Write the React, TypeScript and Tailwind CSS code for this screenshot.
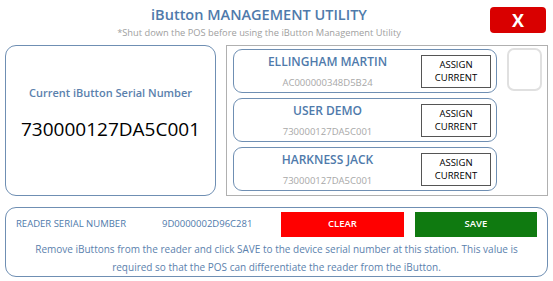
const font = { fontFamily: '"Open Sans", "Noto Sans", sans-serif' }

const users = [
  { name: 'ELLINGHAM MARTIN', serial: 'AC000000348D5B24' },
  { name: 'USER DEMO', serial: '730000127DA5C001' },
  { name: 'HARKNESS JACK', serial: '730000127DA5C001' },
]

function UserRow({ name, serial }: { name: string; serial: string }) {
  return (
    <div className="flex h-[44px] items-center rounded-[9px] border border-[#6f8fb3] pr-[5px]">
      <div className="flex flex-1 flex-col items-center self-stretch pt-[4px]">
        <span className="text-[12px] font-semibold leading-[16px] text-[#4f7aab]">{name}</span>
        <span className="mt-[7px] text-[9.5px] leading-[12px] text-[#a8a8a8]">{serial}</span>
      </div>
      <button className="flex h-[33px] w-[70px] flex-col items-center justify-center border border-[#555] text-[9.5px] leading-[13px] text-black">
        <span>ASSIGN</span>
        <span>CURRENT</span>
      </button>
    </div>
  )
}

export default function App() {
  return (
    <div className="h-[281px] w-[553px] bg-white" style={font}>
      <div className="flex pl-[28px] pt-[7px]">
        <div className="flex w-[462px] flex-col items-center">
          <h1 className="text-[14.5px] font-semibold leading-[15px] text-[#4f7aab]">iButton MANAGEMENT UTILITY</h1>
          <p className="mt-[5px] text-[9.3px] leading-[12px] text-[#a0a0a0]">
            *Shut down the POS before using the iButton Management Utility
          </p>
        </div>
        <button className="flex h-[26px] w-[56px] items-center justify-center rounded-[4px] bg-[#d90000] text-[18px] font-bold text-white">
          X
        </button>
      </div>

      <div className="mt-[6px] flex gap-[10px] px-[5px]">
        <div className="flex h-[151px] w-[211px] flex-col items-center rounded-[11px] border border-[#6f8fb3] pt-[40px]">
          <span className="text-[11px] font-semibold leading-[14px] text-[#5b81ad]">Current iButton Serial Number</span>
          <span className="mt-[18px] text-[19px] leading-[22px] text-black">730000127DA5C001</span>
        </div>
        <div className="flex h-[151px] flex-1 border border-[#b0b0b0] pl-[6px] pt-[3px]">
          <div className="flex w-[264px] flex-col gap-[5px]">
            {users.map((u, i) => (
              <UserRow key={i} name={u.name} serial={u.serial} />
            ))}
          </div>
          <div className="ml-[10px] mt-[-1px] h-[43px] w-[35px] rounded-[7px] border-2 border-[#e0e0e0]" />
        </div>
      </div>

      <div className="mx-[5px] mt-[11px] flex h-[70px] flex-col rounded-[11px] border border-[#6f8fb3] px-[10px] pt-[4px]">
        <div className="flex h-[25px] items-center">
          <span className="w-[148px] text-[9.5px] text-[#4f7aab]">READER SERIAL NUMBER</span>
          <span className="w-[121px] text-[9.5px] text-[#4f7aab]">9D0000002D96C281</span>
          <button className="h-[25px] w-[124px] bg-[#ff0000] text-[9.5px] font-semibold text-white">CLEAR</button>
          <button className="ml-[11px] h-[25px] w-[124px] bg-[#0f7a10] text-[9.5px] font-semibold text-white">SAVE</button>
        </div>
        <p className="mt-[3px] text-center text-[10px] leading-[18px] text-[#5b81ad]">
          Remove iButtons from the reader and click SAVE to the device serial number at this station. This value is
          required so that the POS can differentiate the reader from the iButton.
        </p>
      </div>
    </div>
  )
}
